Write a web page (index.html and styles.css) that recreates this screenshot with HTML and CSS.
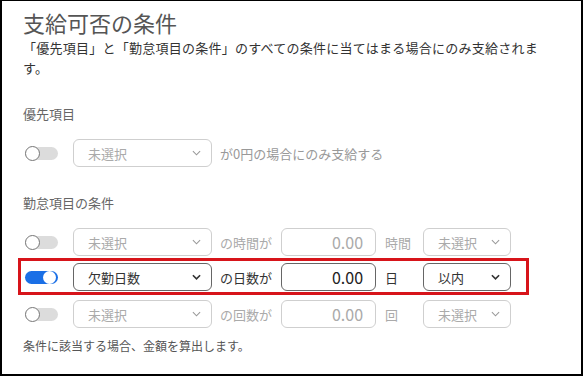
FILE: index.html
```html
<!DOCTYPE html>
<html lang="ja">
<head>
  <meta charset="UTF-8">
  <title>支給可否の条件</title>
  <link rel="stylesheet" href="styles.css">
</head>
<body>
  <div class="panel">
    <h1 class="title">支給可否の条件</h1>
    <p class="description">「優先項目」と「勤怠項目の条件」のすべての条件に当てはまる場合にのみ支給されます。</p>

    <div class="label">優先項目</div>
    <div class="row">
      <span class="toggle"><span class="knob"></span></span>
      <div class="select wide disabled">
        <span>未選択</span>
        <svg class="chevron" viewBox="0 0 10 6"><path d="M1 1 L5 5 L9 1"/></svg>
      </div>
      <span class="note">が0円の場合にのみ支給する</span>
    </div>

    <div class="label">勤怠項目の条件</div>
    <div class="row">
      <span class="toggle"><span class="knob"></span></span>
      <div class="select wide disabled">
        <span>未選択</span>
        <svg class="chevron" viewBox="0 0 10 6"><path d="M1 1 L5 5 L9 1"/></svg>
      </div>
      <span class="cond disabled-text">の時間が</span>
      <div class="number disabled">0.00</div>
      <span class="unit disabled-text">時間</span>
      <div class="select narrow disabled">
        <span>未選択</span>
        <svg class="chevron" viewBox="0 0 10 6"><path d="M1 1 L5 5 L9 1"/></svg>
      </div>
    </div>

    <div class="row highlight">
      <span class="toggle on"><span class="knob"></span></span>
      <div class="select wide">
        <span>欠勤日数</span>
        <svg class="chevron" viewBox="0 0 10 6"><path d="M1 1 L5 5 L9 1"/></svg>
      </div>
      <span class="cond">の日数が</span>
      <div class="number">0.00</div>
      <span class="unit">日</span>
      <div class="select narrow">
        <span>以内</span>
        <svg class="chevron" viewBox="0 0 10 6"><path d="M1 1 L5 5 L9 1"/></svg>
      </div>
    </div>

    <div class="row">
      <span class="toggle"><span class="knob"></span></span>
      <div class="select wide disabled">
        <span>未選択</span>
        <svg class="chevron" viewBox="0 0 10 6"><path d="M1 1 L5 5 L9 1"/></svg>
      </div>
      <span class="cond disabled-text">の回数が</span>
      <div class="number disabled">0.00</div>
      <span class="unit disabled-text">回</span>
      <div class="select narrow disabled">
        <span>未選択</span>
        <svg class="chevron" viewBox="0 0 10 6"><path d="M1 1 L5 5 L9 1"/></svg>
      </div>
    </div>

    <p class="footer">条件に該当する場合、金額を算出します。</p>
  </div>
</body>
</html>
```
FILE: styles.css
```css
body {
  margin: 0;
  background: #fff;
  font-family: "Noto Sans CJK JP", "Noto Sans", sans-serif;
}
.panel {
  width: 583px;
  height: 376px;
  box-sizing: border-box;
  border: 2px solid #000;
  border-top-width: 1px;
  padding: 8px 0 0 21px;
  overflow: hidden;
}
.title {
  margin: 0;
  font-size: 22px;
  font-weight: 400;
  line-height: 26px;
  color: #555;
}
.description {
  margin: 3px 0 0;
  width: 522px;
  font-size: 13px;
  line-height: 20px;
  letter-spacing: 0.25px;
  color: #333;
}
.label {
  margin-top: 26px;
  font-size: 13px;
  line-height: 20px;
  color: #666;
}
.row {
  display: flex;
  align-items: center;
  height: 28px;
  margin-top: 13px;
  font-size: 13px;
}
.label + .row {
  margin-top: 15px;
}
.row.highlight {
  height: 30px;
  margin: 2px 0 0 -5px;
  width: 503px;
  padding: 1px 0 0 2px;
  border: 3px solid #d7141a;
}
.row.highlight + .row {
  margin-top: 5px;
}
.toggle {
  position: relative;
  width: 33px;
  height: 13px;
  margin: 0 15px 0 2px;
  border-radius: 7px;
  background: #dcdcdc;
}
.toggle .knob {
  position: absolute;
  left: 0;
  top: -1px;
  width: 15px;
  height: 15px;
  box-sizing: border-box;
  border: 1px solid #777;
  border-radius: 50%;
  background: #fff;
}
.toggle.on {
  background: #1a6fe6;
}
.toggle.on .knob {
  left: auto;
  right: 2px;
  top: 0;
  width: 13px;
  height: 13px;
  border: none;
}
.select {
  display: flex;
  align-items: center;
  justify-content: space-between;
  height: 28px;
  box-sizing: border-box;
  border: 1px solid #666;
  border-radius: 6px;
  padding: 0 10px 0 14px;
  color: #333;
}
.select.wide {
  width: 139px;
}
.select.narrow {
  width: 88px;
}
.chevron {
  width: 9px;
  height: 6px;
  fill: none;
  stroke: #333;
  stroke-width: 1.8;
}
.select.disabled {
  border-color: #cfcfcf;
  color: #aaa;
}
.select.disabled .chevron {
  stroke: #999;
  stroke-width: 1.2;
}
.note {
  margin-left: 8px;
  color: #999;
}
.cond {
  margin: 0 9px 0 8px;
  color: #333;
}
.number {
  width: 95px;
  height: 28px;
  box-sizing: border-box;
  border: 1px solid #666;
  border-radius: 6px;
  padding-right: 12px;
  text-align: right;
  font-size: 16px;
  line-height: 27px;
  color: #222;
}
.number.disabled {
  border-color: #cfcfcf;
  color: #aaa;
}
.unit {
  width: 38px;
  padding-left: 9px;
  color: #333;
}
.disabled-text {
  color: #aaa;
}
.footer {
  margin: 8px 0 0;
  font-size: 12px;
  line-height: 20px;
  color: #555;
}
```
